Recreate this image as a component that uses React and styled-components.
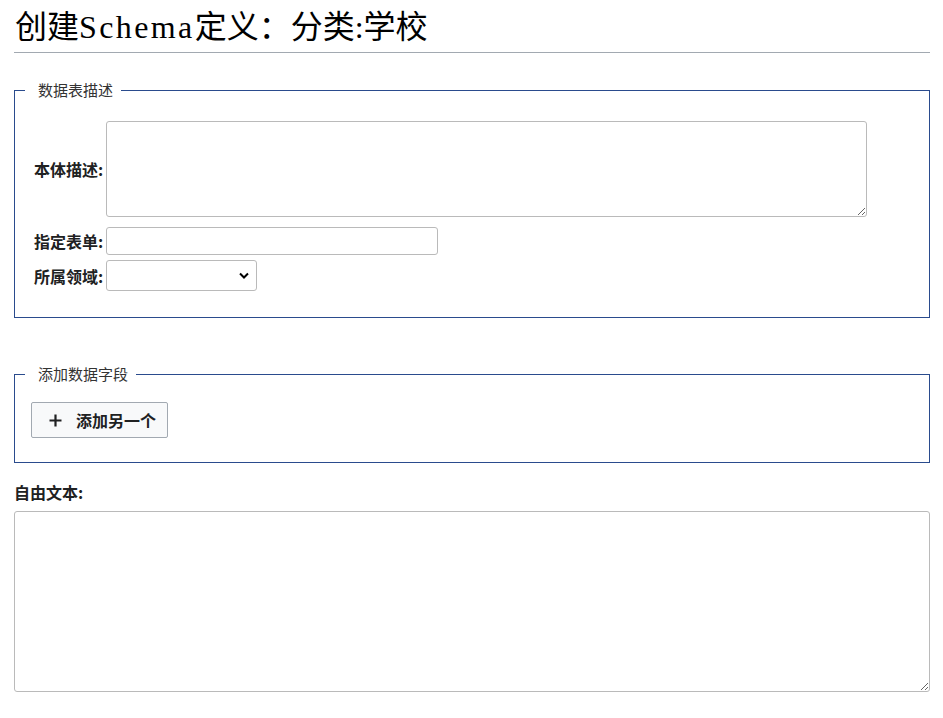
import React from 'react'
import styled, { createGlobalStyle } from 'styled-components'

const GlobalStyle = createGlobalStyle`
  body {
    margin: 0;
    background: #fff;
    color: #202122;
    font-family: "Noto Sans CJK SC", "Liberation Sans", sans-serif;
  }
`

const Page = styled.div`
  padding: 4px 13px 20px 14px;
`

const Title = styled.h1`
  margin: 0 0 28px;
  padding: 0 0 2px 1px;
  font-family: "Liberation Serif", "Noto Sans CJK SC", serif;
  font-weight: normal;
  font-size: 32px;
  line-height: 46px;
  color: #000;
  border-bottom: 1px solid #a2a9b1;
`

const Latin = styled.span`
  letter-spacing: 2.4px;
`

const Fieldset = styled.fieldset`
  margin: 0 0 ${p => p.$gap || 0}px;
  padding: ${p => p.$pad};
  border: 1px solid #2a4b8d;
  min-width: 0;
`

const Legend = styled.legend`
  margin-left: -6px;
  padding: 0 8px 0 13px;
  font-size: 15px;
  color: #333;
  line-height: 18px;
`

const FormGrid = styled.div`
  display: grid;
  grid-template-columns: max-content max-content;
  column-gap: 3px;
  row-gap: 5px;
  align-items: center;
  padding-left: 3px;
`

const Label = styled.label`
  font-weight: bold;
  font-size: 16px;
  color: #202122;
  margin-top: ${p => p.$top || 0}px;
`

const TextArea = styled.textarea`
  display: block;
  box-sizing: border-box;
  width: ${p => p.$width || '761px'};
  height: ${p => p.$height || '96px'};
  border: 1px solid #bababa;
  border-radius: 3px;
  background: #fff;
  font: inherit;
  resize: both;
  margin: 0;
`

const TextInput = styled.input`
  display: block;
  box-sizing: border-box;
  width: 332px;
  height: 28px;
  border: 1px solid #bababa;
  border-radius: 3px;
  background: #fff;
  margin: 0;
`

const SelectWrap = styled.div`
  position: relative;
  width: 151px;
  height: 31px;
`

const Select = styled.select`
  appearance: none;
  box-sizing: border-box;
  width: 100%;
  height: 100%;
  border: 1px solid #bababa;
  border-radius: 3px;
  background: #fff;
  margin: 0;
`

const Chevron = styled.svg`
  position: absolute;
  right: 8px;
  top: 12px;
  pointer-events: none;
`

const AddButton = styled.button`
  display: inline-flex;
  align-items: center;
  gap: 14px;
  box-sizing: border-box;
  height: 36px;
  padding: 0 11px 0 17px;
  border: 1px solid #a2a9b1;
  border-radius: 2px;
  background: #f8f9fa;
  color: #202122;
  font-family: inherit;
  font-weight: bold;
  font-size: 16px;
  cursor: pointer;
`

const Section = styled.div`
  margin-top: 17px;
`

const SectionLabel = styled.div`
  font-weight: bold;
  font-size: 16px;
  line-height: 24px;
  margin-bottom: 7px;
  color: #202122;
`

function Plus() {
  return (
    <svg width="13" height="13" viewBox="0 0 13 13">
      <path d="M6.5 0.5v12M0.5 6.5h12" stroke="#202122" strokeWidth="2.2" />
    </svg>
  )
}

export default function App() {
  return (
    <Page>
      <GlobalStyle />
      <Title>
        创建<Latin>Schema</Latin>定义：分类:学校
      </Title>

      <Fieldset $gap={47} $pad="22px 20px 26px 16px">
        <Legend>数据表描述</Legend>
        <FormGrid>
          <Label>本体描述:</Label>
          <TextArea />
          <Label $top={5}>指定表单:</Label>
          <TextInput style={{ marginTop: 5 }} />
          <Label>所属领域:</Label>
          <SelectWrap>
            <Select defaultValue="">
              <option value=""></option>
            </Select>
            <Chevron width="10" height="7" viewBox="0 0 10 7">
              <path d="M1 1.5l4 4 4-4" fill="none" stroke="#000" strokeWidth="2" />
            </Chevron>
          </SelectWrap>
        </FormGrid>
      </Fieldset>

      <Fieldset $pad="19px 20px 24px 16px">
        <Legend>添加数据字段</Legend>
        <AddButton type="button">
          <Plus />
          添加另一个
        </AddButton>
      </Fieldset>

      <Section>
        <SectionLabel>自由文本:</SectionLabel>
        <TextArea $width="100%" $height="181px" />
      </Section>
    </Page>
  )
}
